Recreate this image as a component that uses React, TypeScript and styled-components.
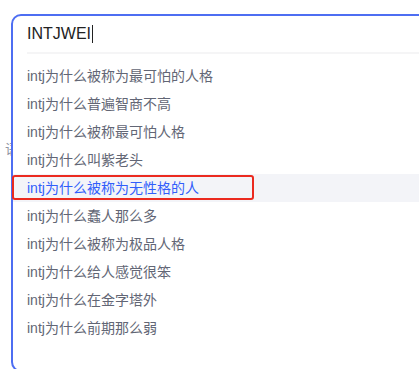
import styled, { createGlobalStyle } from "styled-components";

const GlobalStyle = createGlobalStyle`
  html, body {
    margin: 0;
    padding: 0;
    background: #ffffff;
    overflow: hidden;
  }
  body {
    font-family: "Liberation Sans", "Noto Sans CJK SC", Arial, sans-serif;
  }
`;

const Page = styled.div`
  position: relative;
  width: 419px;
  height: 369px;
  overflow: hidden;
`;

const BackdropText = styled.p`
  margin: 0;
  padding: 139px 0 0 5px;
  font-size: 14px;
  line-height: 20px;
  color: #9195a3;
`;

const Panel = styled.div`
  position: absolute;
  left: 11px;
  top: 14px;
  width: 480px;
  height: 354px;
  background: #ffffff;
  border: 2px solid #4e6ef2;
  border-radius: 10px;
  display: flex;
  flex-direction: column;
`;

const InputRow = styled.div`
  display: flex;
  align-items: center;
  height: 36px;
  padding: 0 0 0 14px;
  font-size: 16px;
  color: #222222;
`;

const Caret = styled.span`
  display: inline-block;
  width: 1px;
  height: 18px;
  margin-left: 1px;
  background: #222222;
`;

const Divider = styled.div`
  height: 2px;
  margin-left: 14px;
  background: #f5f5f6;
`;

const List = styled.ul`
  list-style: none;
  margin: 0;
  padding: 8px 0 0;
`;

const Item = styled.li<{ $active?: boolean }>`
  position: relative;
  height: 28px;
  line-height: 28px;
  padding-left: 14px;
  font-size: 14px;
  color: ${(p) => (p.$active ? "#315efb" : "#626675")};
  background: ${(p) => (p.$active ? "#f3f4f8" : "transparent")};
`;

const Marker = styled.span`
  position: absolute;
  left: -1px;
  top: 1px;
  width: 242px;
  height: 25px;
  box-sizing: border-box;
  border: 2px solid #eb2a1f;
  border-radius: 3px;
`;

const suggestions = [
  "intj为什么被称为最可怕的人格",
  "intj为什么普遍智商不高",
  "intj为什么被称最可怕人格",
  "intj为什么叫紫老头",
  "intj为什么被称为无性格的人",
  "intj为什么蠢人那么多",
  "intj为什么被称为极品人格",
  "intj为什么给人感觉很笨",
  "intj为什么在金字塔外",
  "intj为什么前期那么弱",
];

export default function App() {
  return (
    <Page>
      <GlobalStyle />
      <BackdropText>语</BackdropText>
      <Panel>
        <InputRow>
          INTJWEI
          <Caret />
        </InputRow>
        <Divider />
        <List>
          {suggestions.map((s, i) => (
            <Item key={s} $active={i === 4}>
              {s}
              {i === 4 && <Marker />}
            </Item>
          ))}
        </List>
      </Panel>
    </Page>
  );
}
